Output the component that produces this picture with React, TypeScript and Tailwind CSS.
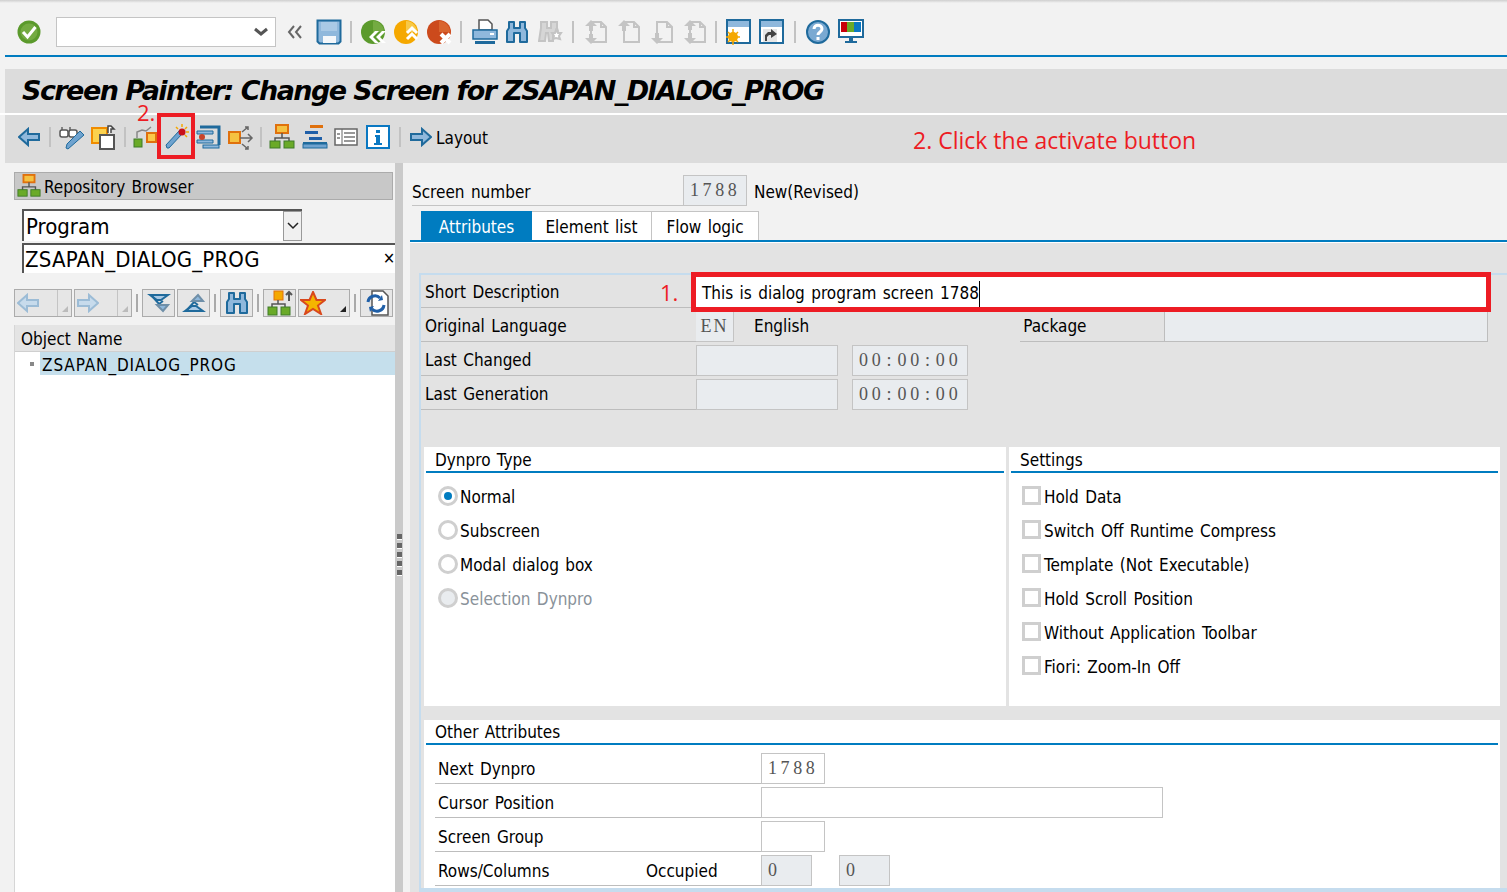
import React from "react";

const B = "#1f6a9c";
const LB = "#8fb8dc";
const G = "#c4c4c4";

function S({ w = 26, h = 26, children, vb }: { w?: number; h?: number; children: React.ReactNode; vb?: string }) {
  return (
    <svg width={w} height={h} viewBox={vb ?? `0 0 ${w} ${h}`} className="block shrink-0">
      {children}
    </svg>
  );
}

const Check = () => (
  <S>
    <circle cx="13" cy="13" r="11.5" fill="#5b9a2c" />
    <circle cx="13" cy="13" r="8.5" fill="#74ab42" />
    <path d="M7 13l4.5 5L19.5 8" fill="none" stroke="#fff" strokeWidth="3" />
  </S>
);
const Save = () => (
  <S>
    <path d="M1.500 1.500h23v21l-2 2h-19l-2-2z" fill="#8fb8dc" stroke="#1f6a9c" strokeWidth="2" />
    <rect x="5" y="3" width="16" height="9" fill="#a9c9e5" />
    <rect x="7" y="17" width="13" height="7" fill="#f4f7fa" />
  </S>
);
function Round({ c, c2, kind }: { c: string; c2: string; kind: "back" | "up" | "x" }) {
  return (
    <S>
      <circle cx="12" cy="13" r="12" fill={c} />
      <path d="M12 2a11 11 0 0 1 11 11h-11z" fill={c2} />
      {kind === "back" && (
        <path d="M8 18l6-6h4l-6 6 6 6h-4zM15 18l6-6h4l-6 6 6 6h-4z" fill="#fff" />
      )}
      {kind === "up" && (
        <g fill="none" stroke="#fff" strokeWidth="3">
          <path d="M13 14l5-5 5 5M13 20l5-5 5 5" />
        </g>
      )}
      {kind === "x" && <path d="M14 15l9 9M23 15l-9 9" stroke="#fff" strokeWidth="4" />}
    </S>
  );
}
const Printer = () => (
  <S>
    <path d="M7 1h9l4 4v6H7z" fill="#fff" stroke="#555" strokeWidth="1.500" />
    <rect x="1" y="11" width="24" height="9" fill="#8fb8dc" stroke="#1f6a9c" strokeWidth="1.500" />
    <rect x="18" y="14" width="4" height="2" fill="#fff" />
    <rect x="3" y="22" width="20" height="3" fill="#1f6a9c" />
  </S>
);
const Binoc = ({ c = LB, e = B }: { c?: string; e?: string }) => (
  <S>
    <path d="M5 3h5v6h6V3h5v6l2 3v11h-7v-9h-6v9H3V12l2-3z" fill={c} stroke={e} strokeWidth="2" strokeLinejoin="round" />
  </S>
);
const FindNext = () => (
  <S>
    <path d="M3 3h6v6h4V3h6v6l1 3-5 3v7H11l-1-8H8l-1 8H1L3 9z" fill="#d6d6d6" stroke={G} strokeWidth="2" />
    <path d="M18 11l2 3 3 0-2 3 1 3-4-1-3 1 1-3-2-3 3 0z" fill="#fff" stroke={G} strokeWidth="2" />
  </S>
);
function Page({ kind }: { kind: "first" | "prev" | "next" | "last" }) {
  return (
    <S>
      <path d="M8 3h10l5 5v15H8z" fill="none" stroke={G} strokeWidth="2" />
      <path d="M18 3v5h5" fill="none" stroke={G} strokeWidth="2" />
      {(kind === "prev" || kind === "first") && <path d="M8 1l6 6h-4v5H6V7H2z" fill={G} />}
      {(kind === "next" || kind === "last") && <path d="M8 25l6-6h-4v-5H6v5H2z" fill={G} />}
      {kind === "first" && <path d="M8 25l6-6h-4v-4H6v4H2z" fill={G} />}
      {kind === "last" && <path d="M8 1l6 6h-4v4H6V7H2z" fill={G} />}
    </S>
  );
}
const Win = ({ kind }: { kind: "sun" | "link" }) => (
  <S>
    <rect x="1" y="1" width="23" height="23" fill="#fff" stroke="#1f6a9c" strokeWidth="2" />
    <rect x="2" y="2" width="21" height="6" fill="#8fb8dc" />
    {kind === "sun" && (
      <g>
        <circle cx="7" cy="18" r="5" fill="#f5a800" />
        <path d="M7 10v16M0 18h14M2 13l10 10M12 13L2 23" stroke="#f5a800" strokeWidth="1.500" />
      </g>
    )}
    {kind === "link" && (
      <g>
        <rect x="4" y="10" width="14" height="13" fill="#e6e6e6" />
        <path d="M6 22v-6l3-3h3v-3l6 5-6 4v-3h-2l-2 2v4z" fill="#444" />
      </g>
    )}
  </S>
);
const Help = () => (
  <S>
    <circle cx="13" cy="13" r="11" fill="#7aa9d2" stroke="#1f6a9c" strokeWidth="2" />
    <path d="M9 10c0-5 8-5 8 0 0 3-4 3-4 6" fill="none" stroke="#fff" strokeWidth="3" />
    <rect x="11.500" y="18" width="3" height="3" fill="#fff" />
  </S>
);
const Monitor = () => (
  <S>
    <rect x="1" y="1" width="24" height="17" fill="#fff" stroke="#1f6a9c" strokeWidth="2" />
    <rect x="3" y="3" width="6" height="10" fill="#c8000a" />
    <rect x="9" y="3" width="7" height="10" fill="#6aaa28" />
    <rect x="16" y="3" width="7" height="10" fill="#0a78c2" />
    <path d="M11 18h4v4h-4zM7 22h12v2H7z" fill="#1f6a9c" />
  </S>
);
const ArrowL = ({ c = "#8fb8dc", e = B }: { c?: string; e?: string }) => (
  <S w={22} h={20}>
    <path d="M1 10l9-8v5h11v6H10v5z" fill={c} stroke={e} strokeWidth="2" />
  </S>
);
const ArrowR = ({ c = "#8fb8dc", e = B }: { c?: string; e?: string }) => (
  <S w={22} h={20}>
    <path d="M21 10l-9-8v5H1v6h11v5z" fill={c} stroke={e} strokeWidth="2" />
  </S>
);
const Glasses = () => (
  <S>
    <path d="M3 3v3M11 3v3" stroke="#666" strokeWidth="1.500" />
    <rect x="1" y="6" width="8" height="7" rx="2" fill="#fff" stroke="#555" strokeWidth="1.500" />
    <rect x="10" y="6" width="8" height="7" rx="2" fill="#fff" stroke="#555" strokeWidth="1.500" />
    <path d="M9 25l-2-1 1-4 13-13 4 4z" fill="#6fa3cf" stroke="#1f6a9c" />
  </S>
);
const Swap = () => (
  <S>
    <rect x="1" y="4" width="15" height="15" fill="#fbd24e" stroke="#f08c00" strokeWidth="2" />
    <rect x="9" y="11" width="14" height="14" fill="#fff" stroke="#555" strokeWidth="2" />
    <path d="M17 9V2h3l3 3h-3v4" fill="#fff" stroke="#444" strokeWidth="1.500" />
  </S>
);
const ObjGraph = () => (
  <S>
    <rect x="2" y="15" width="8" height="8" fill="#6aaa28" stroke="#3f7a28" />
    <rect x="15" y="9" width="9" height="9" fill="#fbc84a" stroke="#e0710d" strokeWidth="2" />
    <path d="M5 14V8l5-2 4 1 5-4" fill="none" stroke="#888" strokeWidth="1.500" />
  </S>
);
const Wand = () => (
  <S>
    <path d="M2 24l-1-3 13-14 3 3L4 24z" fill="#6fa3cf" stroke="#1f6a9c" />
    <circle cx="17" cy="8" r="3.500" fill="#c8101a" />
    <path d="M17 0v3M24 8h-3M22 3l-2 2M22 13l-2-2M11 3l2 2" stroke="#f5a800" strokeWidth="1.500" />
  </S>
);
const Clamp = () => (
  <S>
    <path d="M4 3h19v18" fill="none" stroke="#1f6a9c" strokeWidth="3" />
    <path d="M1 7h16v3H1zM1 16h16v3H1z" fill="#8fb8dc" stroke="#1f6a9c" />
    <rect x="7" y="21" width="16" height="3" fill="#8fb8dc" stroke="#1f6a9c" />
    <circle cx="6" cy="13" r="3" fill="#c8442a" />
  </S>
);
const Branch = () => (
  <S>
    <rect x="1" y="8" width="11" height="11" fill="#f5c242" stroke="#e0710d" strokeWidth="2" />
    <path d="M12 14h12M20 10l4 4-4 4M14 8l6-5M17 3h3v3M14 20l6 5M17 25h3v-3" fill="none" stroke="#666" strokeWidth="1.500" />
  </S>
);
const Hier = ({ s = 26 }: { s?: number }) => (
  <S w={s} h={s} vb="0 0 26 26">
    <rect x="7" y="1" width="12" height="8" fill="#f5c242" stroke="#e0710d" strokeWidth="2" />
    <path d="M13 9v5M6 18v-4h14v4" fill="none" stroke="#555" strokeWidth="1.500" />
    <rect x="1" y="17" width="10" height="7" fill="#6aaa28" stroke="#3f7a28" />
    <rect x="15" y="17" width="10" height="7" fill="#6aaa28" stroke="#3f7a28" />
  </S>
);
const Align = () => (
  <S>
    <rect x="8" y="1" width="13" height="3" fill="#e0710d" />
    <rect x="3" y="7" width="13" height="3" fill="#1f5fa8" />
    <rect x="7" y="13" width="13" height="3" fill="#1f5fa8" />
    <rect x="1" y="18" width="24" height="2" fill="#1f6a9c" />
    <rect x="1" y="20" width="24" height="4" fill="#6fa3cf" stroke="#1f6a9c" />
  </S>
);
const LayoutIcon = () => (
  <S w={24} h={18}>
    <rect x="1" y="1" width="22" height="16" fill="#fff" stroke="#666" strokeWidth="1.500" />
    <path d="M8 1v16" stroke="#666" />
    <path d="M3 6h3M3 10h3M10 5h11M10 9h11M10 13h11" stroke="#777" strokeWidth="1.500" />
  </S>
);
const Info = () => (
  <S w={24} h={24}>
    <rect x="1" y="1" width="22" height="22" fill="#fff" stroke="#0a78c2" strokeWidth="2" />
    <path d="M10 5h4v3h-4zM9 10h5v8h2v2H8v-2h2v-6H9z" fill="#0a78c2" />
  </S>
);
const DoubleDown = ({ up }: { up?: boolean }) => (
  <S w={24} h={20}>
    <g transform={up ? "matrix(1 0 0 -1 0 20)" : undefined} strokeWidth="2">
      <path d="M3 2h18l-7 5h-4z" fill="#a9c9e5" stroke="#1f6a9c" />
      <path d="M4 2l8 9 4-3" fill="none" stroke="#1f6a9c" />
      <path d="M10 12h11l-5 6z" fill="#8fb8dc" stroke="#6f8fa8" />
    </g>
  </S>
);
const HierUp = () => (
  <S w={26} h={26}>
    <rect x="7" y="1" width="9" height="9" fill="#f5a800" stroke="#e0710d" />
    <path d="M11 10v4M5 18v-4h13v4" fill="none" stroke="#555" strokeWidth="1.500" />
    <rect x="1" y="17" width="9" height="8" fill="#6aaa28" stroke="#3f7a28" />
    <rect x="14" y="17" width="9" height="8" fill="#6aaa28" stroke="#3f7a28" />
    <path d="M22 11V3M19 5l3-3 3 3" fill="none" stroke="#555" strokeWidth="2" />
  </S>
);
const Star = () => (
  <S w={26} h={24}>
    <path d="M13 1l3.500 8H25l-7 5.500L21 23l-8-5-8 5 3-8.500L1 9h8.500z" fill="#f5b400" stroke="#d9481c" strokeWidth="2" />
  </S>
);
const Refresh = () => (
  <S w={26} h={26}>
    <path d="M8 1h11l5 5v19H8z" fill="#fff" stroke="#555" strokeWidth="1.500" />
    <path d="M4 12a7 7 0 0 1 12-4M20 15a7 7 0 0 1-12 4" fill="none" stroke="#1f5fa8" strokeWidth="3" />
    <path d="M14 11l5-1-1-5zM10 16l-5 1 1 5z" fill="#1f5fa8" />
  </S>
);

const Sep = ({ c = "#c2c2c2", h = "h-[22px]" }: { c?: string; h?: string }) => <div className={`w-[2px] shrink-0 ${h}`} style={{ background: c }} />;

const Cell = ({ w = 33, children }: { w?: number; children: React.ReactNode }) => (
  <div className="flex h-full shrink-0 items-center justify-center" style={{ width: w }}>
    {children}
  </div>
);

const mono = "font-['Liberation_Serif',serif] tracking-[3.6px] text-[18px] text-[#555] [font-stretch:normal] [word-spacing:0]";

const Time = () => (
  <span className={`${mono} pl-[6px] tracking-[3.8px]`}>
    00<span className="mx-[2px]">:</span>00<span className="mx-[2px]">:</span>00
  </span>
);

function MainToolbar() {
  return (
    <div className="flex h-[52px] shrink-0 items-center pl-[13px] pt-[6px]">
      <Cell w={32}>
        <Check />
      </Cell>
      <div className="ml-[11px] flex h-[30px] w-[220px] items-center justify-end border border-[#c4c4c4] bg-white pr-[7px]">
        <svg width="14" height="10" viewBox="0 0 14 10">
          <path d="M1 2l6 5 6-5" fill="none" stroke="#555" strokeWidth="3" />
        </svg>
      </div>
      <svg width="16" height="14" viewBox="0 0 16 14" className="ml-[11px]">
        <path d="M7 1L2 7l5 6M14 1L9 7l5 6" fill="none" stroke="#666" strokeWidth="2" />
      </svg>
      <div className="ml-[13px]">
        <Save />
      </div>
      <div className="ml-[8px]"><Sep /></div>
      <div className="ml-[9px]"><Round c="#5b9a2c" c2="#74ab42" kind="back" /></div>
      <div className="ml-[7px]"><Round c="#f5a800" c2="#f7c948" kind="up" /></div>
      <div className="ml-[7px]"><Round c="#cc4a1c" c2="#d9642e" kind="x" /></div>
      <div className="ml-[7px]"><Sep /></div>
      <div className="ml-[10px]"><Printer /></div>
      <div className="ml-[6px]"><Binoc /></div>
      <div className="ml-[8px]"><FindNext /></div>
      <div className="ml-[8px]"><Sep /></div>
      <div className="ml-[9px]"><Page kind="first" /></div>
      <div className="ml-[7px]"><Page kind="prev" /></div>
      <div className="ml-[7px]"><Page kind="next" /></div>
      <div className="ml-[7px]"><Page kind="last" /></div>
      <div className="ml-[7px]"><Sep /></div>
      <div className="ml-[9px]"><Win kind="sun" /></div>
      <div className="ml-[7px]"><Win kind="link" /></div>
      <div className="ml-[9px]"><Sep /></div>
      <div className="ml-[9px]"><Help /></div>
      <div className="ml-[7px]"><Monitor /></div>
    </div>
  );
}

function SecondToolbar() {
  return (
    <div className="ml-[5px] flex h-[48px] shrink-0 items-center bg-[#dcdcdc] pb-[4px] pl-[13px] text-black">
      <ArrowL />
      <div className="ml-[9px]"><Sep h="h-[20px]" /></div>
      <div className="ml-[8px]"><Glasses /></div>
      <div className="ml-[6px]"><Swap /></div>
      <div className="ml-[7px]"><Sep h="h-[20px]" /></div>
      <div className="ml-[6px]"><ObjGraph /></div>
      <div className="ml-[7px]"><Wand /></div>
      <div className="ml-[5px]"><Clamp /></div>
      <div className="ml-[6px]"><Branch /></div>
      <div className="ml-[6px]"><Sep h="h-[20px]" /></div>
      <div className="ml-[7px]"><Hier /></div>
      <div className="ml-[7px]"><Align /></div>
      <div className="ml-[6px]"><LayoutIcon /></div>
      <div className="ml-[8px]"><Info /></div>
      <div className="ml-[9px]"><Sep h="h-[20px]" /></div>
      <div className="ml-[9px]"><ArrowR /></div>
      <span className="ml-[4px] pt-[4px]">Layout</span>
    </div>
  );
}

const TBtn = ({ w = 33, children }: { w?: number; children: React.ReactNode }) => (
  <div className="flex h-[28px] shrink-0 items-center justify-center border border-[#ababab] bg-[#e6e6e6]" style={{ width: w }}>
    {children}
  </div>
);
const Corner = ({ c }: { c: string }) => (
  <svg width="6" height="6" viewBox="0 0 6 6" className="absolute bottom-[4px] right-[3px]">
    <path d="M6 0v6H0z" fill={c} />
  </svg>
);

function LeftPanel() {
  return (
    <div className="flex min-w-0 w-[390px] shrink-0 flex-col overflow-hidden">
      <div className="ml-[9px] mr-[2px] mt-[9px] flex h-[28px] items-center border border-[#ababab] bg-[#c8c8c8] pl-[2px]">
        <Hier s={24} />
        <span className="ml-[3px] pt-[4px]">Repository Browser</span>
      </div>
      <div className="ml-[17px] mt-[9px] flex h-[32px] w-[280px] items-stretch border-l-2 border-t-2 border-[#555] bg-white text-[22px]">
        <span className="flex-1 pl-[2px] pt-[1px] leading-[30px]">Program</span>
        <div className="flex w-[19px] items-center justify-center border border-[#999] bg-[#f0f0f0]">
          <svg width="12" height="8" viewBox="0 0 12 8">
            <path d="M1 1l5 5 5-5" fill="none" stroke="#222" strokeWidth="1.500" />
          </svg>
        </div>
      </div>
      <div className="ml-[17px] mt-[2px] flex h-[30px] items-center justify-between border-l-2 border-t-2 border-[#555] bg-white pl-[1px] text-[22px]">
        <span className="tracking-[0.2px]">ZSAPAN_DIALOG_PROG</span>
        <span className="text-[16px]">✕</span>
      </div>
      <div className="ml-[9px] mt-[16px] flex items-center">
        <TBtn w={58}>
          <div className="relative flex h-full w-full items-center pl-[2px]">
            <ArrowL c="#c7dbec" e="#9cbcd6" />
            <div className="absolute bottom-0 right-[13px] top-0 w-px bg-[#c4c4c4]" />
            <Corner c="#bbb" />
          </div>
        </TBtn>
        <div className="ml-[2px]">
          <TBtn w={58}>
            <div className="relative flex h-full w-full items-center pl-[2px]">
              <ArrowR c="#c7dbec" e="#9cbcd6" />
              <div className="absolute bottom-0 right-[13px] top-0 w-px bg-[#c4c4c4]" />
              <Corner c="#bbb" />
            </div>
          </TBtn>
        </div>
        <div className="ml-[4px]"><Sep c="#aaa" h="h-[18px]" /></div>
        <div className="ml-[4px]"><TBtn><DoubleDown /></TBtn></div>
        <div className="ml-[2px]"><TBtn><DoubleDown up /></TBtn></div>
        <div className="ml-[4px]"><Sep c="#aaa" h="h-[18px]" /></div>
        <div className="ml-[4px]"><TBtn><Binoc /></TBtn></div>
        <div className="ml-[4px]"><Sep c="#aaa" h="h-[18px]" /></div>
        <div className="ml-[4px]"><TBtn><HierUp /></TBtn></div>
        <div className="ml-[2px]">
          <TBtn w={52}>
            <div className="relative flex h-full w-full items-center pl-[1px]">
              <Star />
              <Corner c="#222" />
            </div>
          </TBtn>
        </div>
        <div className="ml-[4px]"><Sep c="#aaa" h="h-[18px]" /></div>
        <div className="ml-[4px]"><TBtn><Refresh /></TBtn></div>
      </div>
      <div className="ml-[9px] mt-[8px] flex flex-1 flex-col border-l border-[#d6d6d6]">
        <div className="flex h-[27px] items-center border-b border-[#cfcfcf] bg-[#e4e4e4] pl-[6px] pt-[4px]">Object Name</div>
        <div className="flex-1 bg-white">
          <div className="flex h-[23px] items-center">
            <div className="ml-[15px] h-[4px] w-[4px] bg-[#888]" />
            <div className="ml-[6px] flex h-full flex-1 items-center bg-[#c5dfec] pl-[2px] pt-[4px] tracking-[0.9px]">ZSAPAN_DIALOG_PROG</div>
          </div>
        </div>
      </div>
    </div>
  );
}

const Sash = () => (
  <div className="flex w-[8px] shrink-0 flex-col items-center gap-[4px] bg-[#cacaca] pl-[1px] pt-[371px]">
    {[0, 1, 2, 3, 4].map((i) => (
      <div key={i} className="h-[5px] w-[5px] bg-[#666] shadow-[0_1px_0_#fff]" />
    ))}
  </div>
);

const Head = ({ t, h = "h-[26px] pt-[4px]" }: { t: string; h?: string }) => (
  <div className={`mx-[2px] flex items-center border-b-2 border-[#007cc0] pl-[9px] ${h}`}>{t}</div>
);

const Radio = ({ t, on, off }: { t: string; on?: boolean; off?: boolean }) => (
  <div className="flex h-[34px] items-center pl-[14px]">
    <div className={`mb-[1px] flex h-[20px] w-[20px] items-center justify-center rounded-full border-[3px] border-[#cfcfcf] ${off ? "bg-[#e9ecef]" : "bg-white"}`}>
      {on && <div className="h-[8px] w-[8px] rounded-full bg-[#007cc0]" />}
    </div>
    <span className={`ml-[2px] pt-[4px] ${off ? "text-[#8a929a]" : ""}`}>{t}</span>
  </div>
);

const CheckRow = ({ t }: { t: string }) => (
  <div className="flex h-[34px] items-center pl-[13px]">
    <div className="mb-[1px] h-[19px] w-[19px] border-[3px] border-[#cfcfcf] bg-white" />
    <span className="ml-[3px] pt-[4px]">{t}</span>
  </div>
);

const Field = ({ w, cls = "bg-[#e9ecef]", children }: { w: number; cls?: string; children?: React.ReactNode }) => (
  <div className={`flex h-[31px] shrink-0 items-center border border-[#c4c4c4] ${cls}`} style={{ width: w }}>
    {children}
  </div>
);

const Row = ({ label, h = "h-[34px]", children }: { label: string; h?: string; children: React.ReactNode }) => (
  <div className={`flex items-end ${h}`}>
    <div className="flex h-full w-[275px] shrink-0 items-center border-b border-[#bdbdbd] pl-[4px] pt-[4px]">{label}</div>
    {children}
  </div>
);

const ORow = ({ label, extra, children }: { label: string; extra?: string; children: React.ReactNode }) => (
  <div className="flex h-[34px] items-end pl-[11px]">
    <div className="flex h-full w-[326px] shrink-0 items-center border-b border-[#bdbdbd] pl-[3px] pt-[6px]">
      <span className="w-[208px]">{label}</span>
      {extra && <span>{extra}</span>}
    </div>
    {children}
  </div>
);

function RightPanel() {
  return (
    <div className="flex min-w-0 flex-1 flex-col pl-[7px]">
      <div className="mt-[12px] flex h-[31px] items-end pl-[2px]">
        <div className="flex h-[29px] w-[271px] items-center border-b border-[#c4c4c4] pt-[4px]">Screen number</div>
        <Field w={64}>
          <span className={`${mono} pl-[6px]`}>1788</span>
        </Field>
        <span className="ml-[7px] self-center pt-[4px]">New(Revised)</span>
      </div>
      <div className="mt-[5px] flex h-[31px] items-stretch border-b-2 border-[#007cc0] pl-[11px]">
        <div className="flex w-[111px] items-center justify-center bg-[#007cc0] pt-[4px] text-white">Attributes</div>
        <div className="flex w-[120px] items-center justify-center border-r border-t border-[#c4c4c4] bg-white pt-[4px]">Element list</div>
        <div className="flex w-[107px] items-center justify-center border-r border-t border-[#c4c4c4] bg-white pt-[4px]">Flow logic</div>
      </div>
      <div className="h-px shrink-0 bg-white" />
      <div className="flex flex-1 flex-col bg-[#e3e3e3] pl-[9px] pt-[30px]">
        <div className="flex flex-1 flex-col border-b-[4px] border-l-2 border-t-2 border-[#c5dcee]">
          <Row label="Short Description" h="h-[33px]">
            <div className="mb-[1px] flex h-[31px] w-[791px] items-center border-t border-[#007cc0] bg-white pl-[6px] pt-[4px]">
              <span className="border-r border-black">This is dialog program screen 1788</span>
            </div>
          </Row>
          <Row label="Original Language">
            <div className="flex h-[30px] w-[38px] items-center justify-center border-b border-r border-[#c4c4c4] bg-[#e9ecef]">
              <span className="font-['Liberation_Serif',serif] text-[18px] tracking-[2px] text-[#555] [font-stretch:normal]">EN</span>
            </div>
            <span className="ml-[20px] self-center pt-[4px]">English</span>
            <div className="ml-[211px] flex h-full w-[144px] items-center border-b border-[#bdbdbd] pl-[3px] pt-[4px]">Package</div>
            <div className="h-full w-[324px] border-b border-l border-r border-[#bdbdbd] bg-[#e9ecef]" />
          </Row>
          <Row label="Last Changed">
            <Field w={142} />
            <div className="ml-[14px]">
              <Field w={116}><Time /></Field>
            </div>
          </Row>
          <Row label="Last Generation">
            <Field w={142} />
            <div className="ml-[14px]">
              <Field w={116}><Time /></Field>
            </div>
          </Row>
          <div className="ml-[3px] mt-[37px] flex h-[259px] gap-[3px]">
            <div className="w-[582px] bg-white">
              <Head t="Dynpro Type" />
              <div className="pt-[6px]">
                <Radio t="Normal" on />
                <Radio t="Subscreen" />
                <Radio t="Modal dialog box" />
                <Radio t="Selection Dynpro" off />
              </div>
            </div>
            <div className="w-[491px] bg-white">
              <Head t="Settings" />
              <div className="pt-[6px]">
                <CheckRow t="Hold Data" />
                <CheckRow t="Switch Off Runtime Compress" />
                <CheckRow t="Template (Not Executable)" />
                <CheckRow t="Hold Scroll Position" />
                <CheckRow t="Without Application Toolbar" />
                <CheckRow t="Fiori: Zoom-In Off" />
              </div>
            </div>
          </div>
          <div className="ml-[3px] mt-[14px] w-[1076px] flex-1 bg-white">
            <Head t="Other Attributes" h="h-[25px] pt-[2px]" />
            <div className="pt-[5px]">
              <ORow label="Next Dynpro">
                <Field w={64} cls="bg-white">
                  <span className={`${mono} pl-[6px]`}>1788</span>
                </Field>
              </ORow>
              <ORow label="Cursor Position">
                <Field w={402} cls="bg-white" />
              </ORow>
              <ORow label="Screen Group">
                <Field w={64} cls="bg-white" />
              </ORow>
              <ORow label="Rows/Columns" extra="Occupied">
                <Field w={51}>
                  <span className={`${mono} pl-[6px]`}>0</span>
                </Field>
                <div className="ml-[27px]">
                  <Field w={51}>
                    <span className={`${mono} pl-[6px]`}>0</span>
                  </Field>
                </div>
              </ORow>
            </div>
          </div>
        </div>
      </div>
    </div>
  );
}

export default function App() {
  return (
    <div className="relative flex h-[892px] w-[1507px] flex-col overflow-hidden bg-[#f2f2f2] font-['DejaVu_Sans_Condensed','DejaVu_Sans',sans-serif] text-[17px] text-black [font-stretch:condensed] [word-spacing:1.5px]">
      <div className="h-[3px] shrink-0 bg-gradient-to-b from-[#cfcfcf] to-[#f2f2f2]" />
      <MainToolbar />
      <div className="ml-[5px] h-[2px] shrink-0 bg-[#007cc0]" />
      <div className="ml-[5px] mt-[12px] flex h-[44px] shrink-0 items-center bg-[#dcdcdc] pl-[17px] font-['DejaVu_Sans',sans-serif] text-[27px] font-bold italic tracking-[-1.55px] [font-stretch:normal] [word-spacing:0]">
        Screen Painter: Change Screen for ZSAPAN_DIALOG_PROG
      </div>
      <div className="h-[2px] shrink-0 bg-white" />
      <SecondToolbar />
      <div className="flex min-h-0 flex-1 pl-[5px]">
        <LeftPanel />
        <Sash />
        <RightPanel />
      </div>

      {/* annotations */}
      <div className="absolute left-[157px] top-[113px] h-[46px] w-[38px] border-[4px] border-[#ed1c24]" />
      <span className="absolute left-[137px] top-[96px] font-['Open_Sans',sans-serif] text-[22px] text-[#ed1c24] [font-stretch:normal] [word-spacing:0]">2.</span>
      <span className="absolute left-[913px] top-[123px] font-['Open_Sans',sans-serif] text-[23px] text-[#ed1c24] [font-stretch:normal] [word-spacing:0]">2. Click the activate button</span>
      <span className="absolute left-[660px] top-[276px] font-['Open_Sans',sans-serif] text-[22px] text-[#ed1c24] [font-stretch:normal] [word-spacing:0]">1.</span>
      <div className="absolute left-[691px] top-[272px] h-[40px] w-[800px] border-[5px] border-[#ed1c24]" />
    </div>
  );
}
